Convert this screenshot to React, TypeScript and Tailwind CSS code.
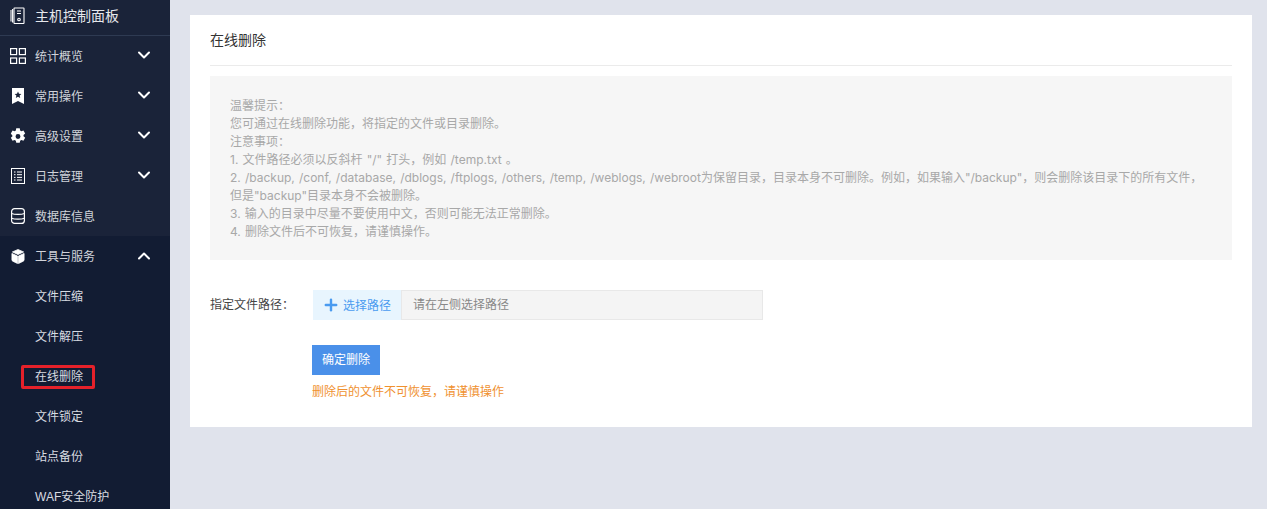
import { ChevronDown, ChevronUp, Plus } from "lucide-react";
import type { ReactNode } from "react";

const font = "font-['Liberation_Sans','Noto_Sans_CJK_SC',sans-serif]";

const ServerIcon = () => (
  <svg width="16" height="18" viewBox="0 0 16 18" fill="none" stroke="#fff" strokeWidth="1.1">
    <rect x="4" y="1" width="10" height="15.5" rx="0.5" />
    <path d="M1 3v11.5M2.6 2v13.5M7 4h4M7 6.5h4" />
    <circle cx="9" cy="12.5" r="1.3" />
  </svg>
);

const GridIcon = () => (
  <svg width="16" height="16" viewBox="0 0 16 16" fill="none" stroke="#fff" strokeWidth="1.2">
    <rect x="0.6" y="0.6" width="6" height="6" />
    <rect x="9.4" y="0.6" width="6" height="6" />
    <rect x="0.6" y="10" width="6" height="5.4" />
    <rect x="9.4" y="10" width="6" height="5.4" />
  </svg>
);

const BookmarkIcon = () => (
  <svg width="14" height="16" viewBox="0 0 14 16">
    <path fill="#fff" d="M1 0h12v16l-6-3-6 3z" />
    <path fill="#1a2339" d="M7 3.5l1 2.3 2.4.2-1.8 1.6.6 2.4L7 8.7 4.8 10l.6-2.4L3.6 6 6 5.8z" />
  </svg>
);

const GearIcon = () => (
  <svg width="16" height="17" viewBox="0.5 -0.3 15 16.6">
    <path
      fill="#fff"
      fillRule="evenodd"
      d="M6.3 0h3.4l.4 2.1 1.2.7 2-.7 1.7 3-1.6 1.4v1.2l1.6 1.4-1.7 3-2-.7-1.2.7-.4 2.1H6.3l-.4-2.1-1.2-.7-2 .7-1.7-3 1.6-1.4V7.200L1 5.100l1.700-3 2 .7 1.200-.7zM8 5.600a2.400 2.400 0 100 4.800 2.400 2.400 0 000-4.800z"
    />
  </svg>
);

const ListIcon = () => (
  <svg width="14" height="16" viewBox="0 0 14 16" fill="none" stroke="#fff">
    <rect x="0.5" y="0.5" width="13" height="15" />
    <path d="M3 4h1.500M6 4h5M3 6.700h1.500M6 6.700h5M3 9.400h1.500M6 9.400h5M3 12h1.500M6 12h5" />
  </svg>
);

const DatabaseIcon = () => (
  <svg width="14" height="16" viewBox="0 0 14 16" fill="none" stroke="#fff" strokeWidth="1.2">
    <rect x="0.6" y="0.6" width="12.8" height="14.8" rx="3" />
    <path d="M0.6 5.500c3 1.200 9.800 1.200 12.800 0M0.6 10.300c3 1.200 9.800 1.200 12.800 0" />
  </svg>
);

const BoxIcon = () => (
  <svg width="14" height="15" viewBox="0 0 14 16">
    <path
      fill="#fff"
      stroke="#fff"
      strokeWidth="0.8"
      strokeLinejoin="round"
      d="M7 .5l6 2.600-6 2.800-6-2.800zM.5 4.700l6 2.800v8L1.400 13c-.6-.3-.9-.8-.9-1.400zM13.500 4.700l-6 2.800v8l5.100-2.500c.6-.3.9-.8.9-1.400z"
    />
  </svg>
);

function MenuItem({ icon, label, open }: { icon: ReactNode; label: string; open?: boolean }) {
  return (
    <div className="flex h-10 items-center pl-[10px] pr-4 text-xs text-[#d0d3da]">
      <span className="flex w-[25px] shrink-0 justify-start">
        <span className="flex w-4 justify-center">{icon}</span>
      </span>
      <span className="flex-1 pt-0.5">{label}</span>
      {open === undefined ? null : open ? (
        <ChevronUp size={20} strokeWidth={2.4} className="text-white" />
      ) : (
        <ChevronDown size={20} strokeWidth={2.4} className="mb-0.5 text-white" />
      )}
    </div>
  );
}

const subItems = ["文件压缩", "文件解压", "在线删除", "文件锁定", "站点备份", "WAF安全防护"];

const notes = [
  "温馨提示：",
  "您可通过在线删除功能，将指定的文件或目录删除。",
  "注意事项：",
  '1. 文件路径必须以反斜杆 "/" 打头，例如 /temp.txt 。',
  '2. /backup, /conf, /database, /dblogs, /ftplogs, /others, /temp, /weblogs, /webroot为保留目录，目录本身不可删除。例如，如果输入"/backup"，则会删除该目录下的所有文件，',
  '但是"backup"目录本身不会被删除。',
  "3. 输入的目录中尽量不要使用中文，否则可能无法正常删除。",
  "4. 删除文件后不可恢复，请谨慎操作。",
];

export default function App() {
  return (
    <div className={`flex h-[509px] w-[1267px] overflow-hidden bg-[#e0e3ec] ${font}`}>
      <aside className="w-[170px] shrink-0 overflow-hidden bg-[#1a2339]">
        <div className="flex h-9 items-center gap-[9px] border-b border-[#2e3a52] pb-1 pl-[10px] text-sm text-[#e6e8ec]">
          <ServerIcon />
          <span>主机控制面板</span>
        </div>
        <MenuItem icon={<GridIcon />} label="统计概览" open={false} />
        <MenuItem icon={<BookmarkIcon />} label="常用操作" open={false} />
        <MenuItem icon={<GearIcon />} label="高级设置" open={false} />
        <MenuItem icon={<ListIcon />} label="日志管理" open={false} />
        <MenuItem icon={<DatabaseIcon />} label="数据库信息" />
        <div className="bg-[#121c33]">
          <MenuItem icon={<BoxIcon />} label="工具与服务" open />
          {subItems.map((item) => (
            <div key={item} className="flex h-10 items-center pl-[35px] pt-0.5 text-xs text-[#d8dbe1]">
              {item === "在线删除" ? (
                <span className="relative">
                  {item}
                  <span className="absolute -inset-y-[4px] -left-[14px] -right-[12px] rounded-[2px] border-[3px] border-[#e5212a]" />
                </span>
              ) : (
                item
              )}
            </div>
          ))}
        </div>
      </aside>

      <main className="flex-1 pl-5 pr-[15px] pt-[15px]">
        <div className="h-[412px] bg-white px-5">
          <h2 className="flex h-[51px] items-center border-b border-[#ebebeb] text-sm font-normal text-[#333]">
            在线删除
          </h2>
          <div className="mt-[10px] h-[184px] bg-[#f6f6f6] pl-5 pt-[21px] font-['Inter','Noto_Sans_CJK_SC',sans-serif] text-xs leading-[18px] text-[#a8a8a8] [word-spacing:0.8px]">
            {notes.map((line) => (
              <p key={line}>{line}</p>
            ))}
          </div>
          <div className="mt-[30px] flex items-center">
            <span className="w-[103px] text-xs text-[#444]">指定文件路径：</span>
            <div className="flex h-[30px] w-[450px] text-xs">
              <div className="flex w-[88px] items-center gap-[3px] bg-[#e8f5fe] pl-[9px] text-[#4a9bf0]">
                <Plus size={18} strokeWidth={3.2} />
                <span className="pt-0.5">选择路径</span>
              </div>
              <div className="flex flex-1 items-center border border-[#e8e8e8] bg-[#f4f4f4] pl-[11px] text-[#888]">
                请在左侧选择路径
              </div>
            </div>
          </div>
          <div className="ml-[102px] mt-[25px]">
            <button className="h-[30px] w-[68px] bg-[#4a90e9] text-xs text-white">确定删除</button>
            <p className="mt-[9px] text-xs text-[#f0912f]">删除后的文件不可恢复，请谨慎操作</p>
          </div>
        </div>
      </main>
    </div>
  );
}
